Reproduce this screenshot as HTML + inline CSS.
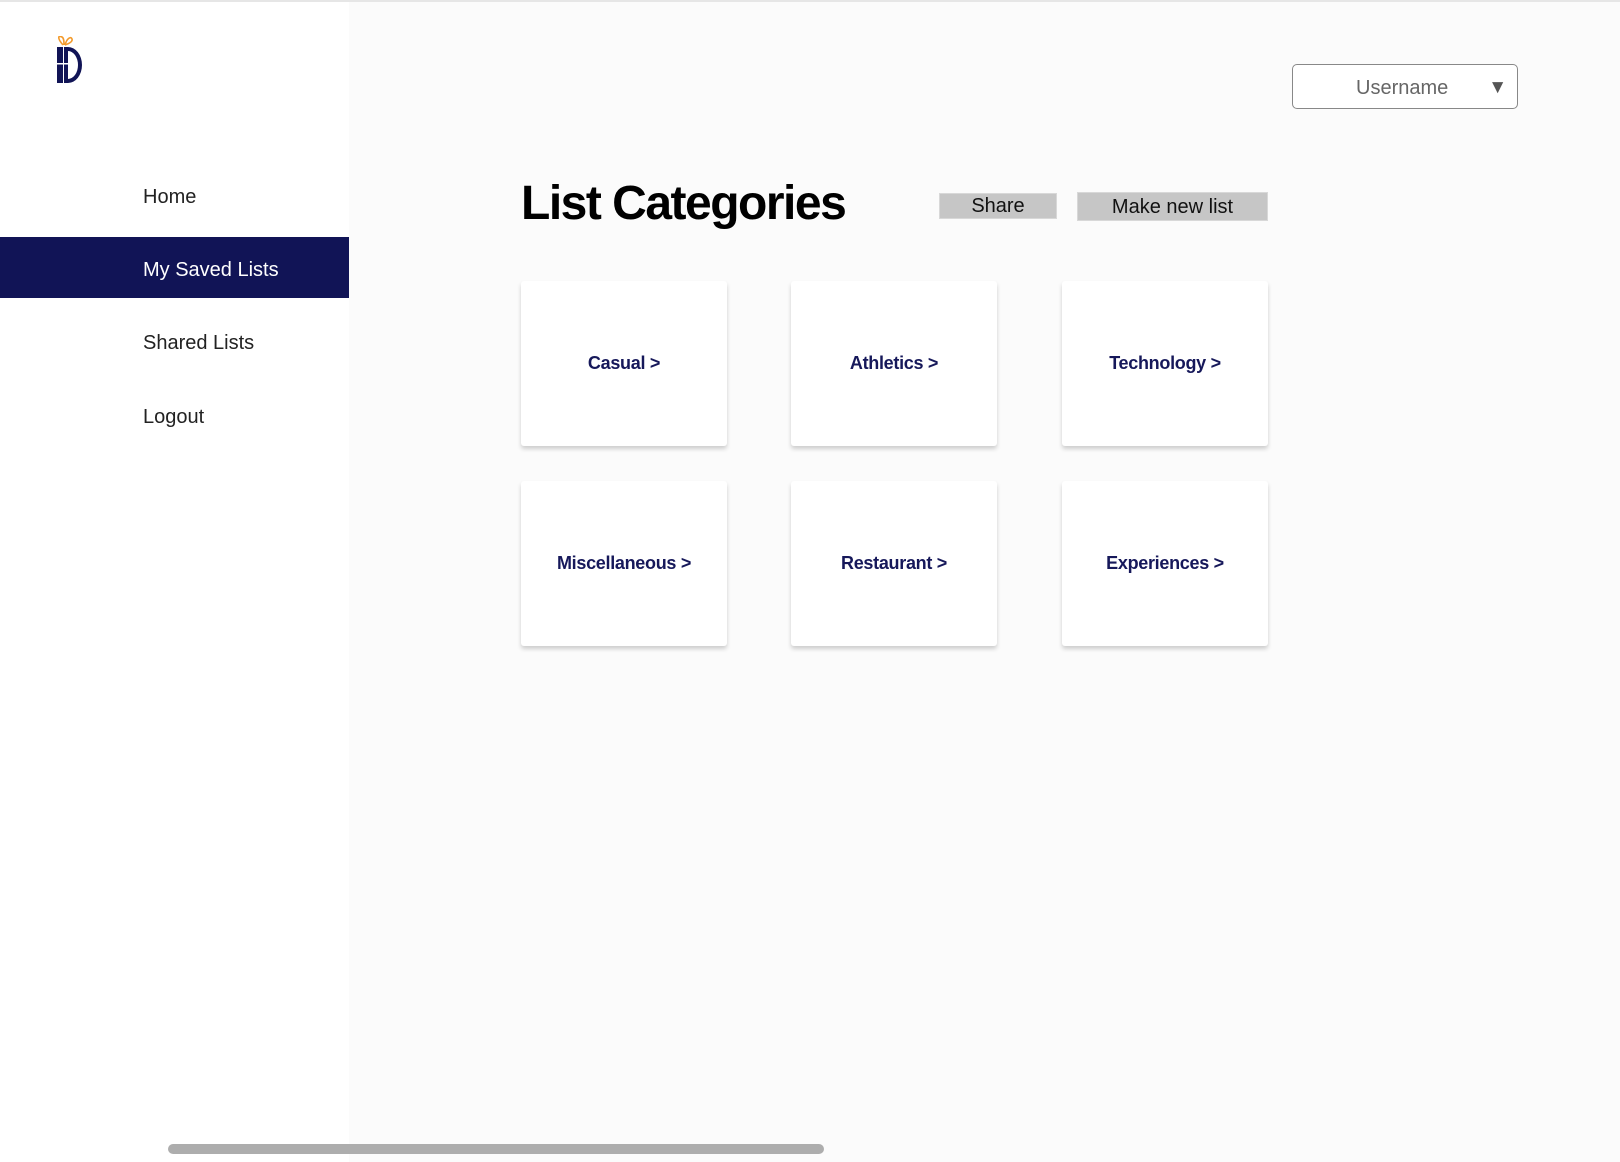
<!DOCTYPE html><html><head><style>
body{margin:0;width:1620px;height:1162px;background:#fbfbfb;font-family:"Liberation Sans",sans-serif;position:relative;overflow:hidden}
.side{position:absolute;left:0;top:0;width:349px;height:1162px;background:#fff}
.top{position:absolute;left:0;top:0;width:1620px;height:2px;background:#e6e6e6}
.nav{position:absolute;left:143px;font-size:20px;color:#222}
.hl{position:absolute;left:0;top:237px;width:349px;height:61px;background:#111456}
.card{position:absolute;width:206px;height:165px;background:#fff;box-shadow:0 3px 4px rgba(0,0,0,.18);border-radius:3px;display:flex;align-items:center;justify-content:center;font-weight:bold;font-size:18px;color:#16185a;letter-spacing:-0.3px}
.btn{position:absolute;background:#c6c6c6;border:1px solid #d8d8d8;font-size:20px;color:#111;text-align:center;box-sizing:border-box}
</style></head><body>
<div class="side"></div><div class="top"></div>
<svg style="position:absolute;left:54px;top:36px" width="32" height="48" viewBox="0 0 32 48">
<path d="M9 9 C3 2,4 -1,8 1 C10 2,10 6,10 9 M11 9 C13 2,17 0,18 3 C19 6,14 8,11 9" fill="none" stroke="#f39a2b" stroke-width="1.6"/>
<rect x="3" y="11" width="6" height="36" fill="#111456"/>
<path d="M10 11 H14 A14 18 0 0 1 14 47 H10 Z M14 15 V43 A10 14 0 0 0 14 15 Z" fill="#111456" fill-rule="evenodd"/>
<rect x="3" y="27" width="11" height="1.5" fill="#fff"/>
</svg>
<div class="hl"></div>
<div class="nav" style="top:186px">Home</div>
<div class="nav" style="top:259px;color:#fff">My Saved Lists</div>
<div class="nav" style="top:332px">Shared Lists</div>
<div class="nav" style="top:406px">Logout</div>
<div style="position:absolute;left:1292px;top:64px;width:226px;height:45px;box-sizing:border-box;border:1.5px solid #888;border-radius:5px;background:#fff;font-size:20px;color:#666">
<span style="position:absolute;left:63px;top:12px">Username</span><span style="position:absolute;right:10px;top:12px;font-size:19px;color:#555">▼</span></div>
<div style="position:absolute;left:521px;top:176px;font-size:48px;font-weight:bold;color:#000;letter-spacing:-1.5px">List Categories</div>
<div class="btn" style="left:939px;top:193px;width:118px;height:26px;line-height:24px">Share</div>
<div class="btn" style="left:1077px;top:192px;width:191px;height:29px;line-height:28px">Make new list</div>
<div class="card" style="left:521px;top:281px">Casual &gt;</div>
<div class="card" style="left:791px;top:281px">Athletics &gt;</div>
<div class="card" style="left:1062px;top:281px">Technology &gt;</div>
<div class="card" style="left:521px;top:481px">Miscellaneous &gt;</div>
<div class="card" style="left:791px;top:481px">Restaurant &gt;</div>
<div class="card" style="left:1062px;top:481px">Experiences &gt;</div>
<div style="position:absolute;left:168px;top:1144px;width:656px;height:10px;border-radius:5px;background:#adadad"></div>
</body></html>
